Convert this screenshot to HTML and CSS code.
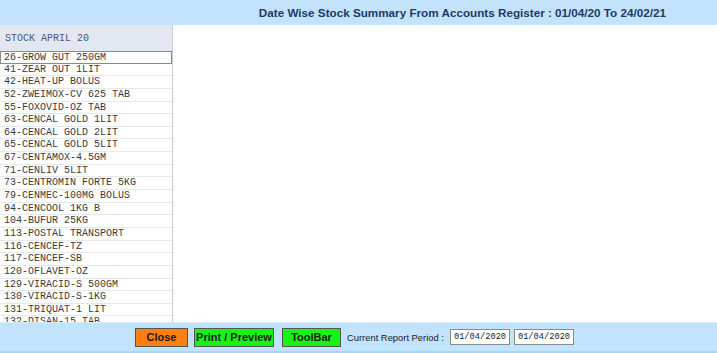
FILE: index.html
```html
<!DOCTYPE html>
<html>
<head>
<meta charset="utf-8">
<link rel="stylesheet" href="styles.css">
</head>
<body>
<div class="page">
  <header class="topbar">
    <h1 class="title">Date Wise Stock Summary From Accounts Register : 01/04/20 To 24/02/21</h1>
  </header>
  <main class="main">
    <aside class="panel">
      <div class="panel-head">STOCK APRIL 20</div>
      <ul class="list">
        <li class="item selected">26-GROW GUT 250GM</li>
        <li class="item">41-ZEAR OUT 1LIT</li>
        <li class="item">42-HEAT-UP BOLUS</li>
        <li class="item">52-ZWEIMOX-CV 625 TAB</li>
        <li class="item">55-FOXOVID-OZ TAB</li>
        <li class="item">63-CENCAL GOLD 1LIT</li>
        <li class="item">64-CENCAL GOLD 2LIT</li>
        <li class="item">65-CENCAL GOLD 5LIT</li>
        <li class="item">67-CENTAMOX-4.5GM</li>
        <li class="item">71-CENLIV 5LIT</li>
        <li class="item">73-CENTROMIN FORTE 5KG</li>
        <li class="item">79-CENMEC-100MG BOLUS</li>
        <li class="item">94-CENCOOL 1KG B</li>
        <li class="item">104-BUFUR 25KG</li>
        <li class="item">113-POSTAL TRANSPORT</li>
        <li class="item">116-CENCEF-TZ</li>
        <li class="item">117-CENCEF-SB</li>
        <li class="item">120-OFLAVET-OZ</li>
        <li class="item">129-VIRACID-S 500GM</li>
        <li class="item">130-VIRACID-S-1KG</li>
        <li class="item">131-TRIQUAT-1 LIT</li>
        <li class="item">132-DISAN-15 TAB</li>
      </ul>
    </aside>
    <section class="content"></section>
  </main>
  <footer class="footbar">
    <button class="btn btn-close">Close</button>
    <button class="btn btn-green btn-print">Print / Preview</button>
    <button class="btn btn-green btn-tool">ToolBar</button>
    <span class="period-label">Current Report Period :</span>
    <input class="date" type="text" value="01/04/2020">
    <input class="date" type="text" value="01/04/2020">
  </footer>
</div>
</body>
</html>
```
FILE: styles.css
```css
html, body {
  margin: 0;
  padding: 0;
}
body {
  width: 717px;
  height: 353px;
  overflow: hidden;
  background: #ffffff;
  font-family: "Liberation Sans", Arial, sans-serif;
}
.page {
  display: flex;
  flex-direction: column;
  height: 353px;
}
.topbar {
  height: 25px;
  flex: none;
  background: #c3e2fb;
  display: flex;
  align-items: center;
  justify-content: flex-end;
  padding-right: 51px;
}
.title {
  margin: 0;
  font-size: 11.7px;
  font-weight: bold;
  color: #1f3a68;
}
.main {
  flex: 1;
  display: flex;
  min-height: 0;
}
.panel {
  width: 172px;
  border-right: 1px solid #c8ccd4;
  display: flex;
  flex-direction: column;
  overflow: hidden;
}
.panel-head {
  height: 26px;
  flex: none;
  background: #e3e7f1;
  font-family: "Liberation Mono", "Courier New", monospace;
  font-size: 10px;
  color: #4a5a7a;
  display: flex;
  align-items: center;
  padding-left: 5px;
}
.list {
  list-style: none;
  margin: 0;
  padding: 0;
  overflow: hidden;
}
.item {
  height: 12.65px;
  box-sizing: border-box;
  line-height: 12px;
  padding-left: 4px;
  font-family: "Liberation Mono", "Courier New", monospace;
  font-size: 10px;
  color: #3a3a3a;
  border-bottom: 1px solid #e6e8ec;
  white-space: nowrap;
}
.item.selected {
  border: 1px solid #8a8a8a;
  padding-left: 3px;
  line-height: 11px;
}
.content {
  flex: 1;
  background: #ffffff;
}
.footbar {
  height: 31px;
  flex: none;
  background: #c2e3fc;
  border-top: 1px solid #d6ecfd;
  border-bottom: 2px solid #a8d6f6;
  display: flex;
  align-items: center;
  padding-left: 135px;
  box-sizing: border-box;
}
.btn {
  height: 19px;
  box-sizing: border-box;
  border: 1px solid #555;
  font-family: "Liberation Sans", Arial, sans-serif;
  font-size: 11px;
  font-weight: bold;
  color: #1a1a1a;
  padding: 0;
  margin: 0;
}
.btn-close {
  width: 53px;
  background: #ff7f10;
  margin-right: 6px;
}
.btn-green {
  background: #17f317;
}
.btn-print {
  width: 80px;
  margin-right: 8px;
}
.btn-tool {
  width: 59px;
  margin-right: 6px;
}
.period-label {
  font-size: 9.4px;
  color: #1a1a1a;
  margin-right: 6px;
}
.date {
  width: 60px;
  height: 16px;
  box-sizing: border-box;
  border: 1px solid #8a8a8a;
  background: #fff;
  font-family: "Liberation Mono", "Courier New", monospace;
  font-size: 8.7px;
  color: #222;
  padding: 0 0 0 3px;
  margin: 0 4px 0 0;
}
```
